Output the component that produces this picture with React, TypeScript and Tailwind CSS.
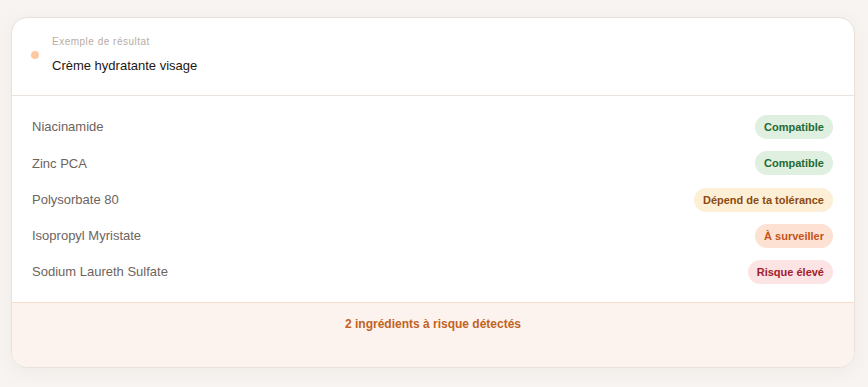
import React from 'react';

type Level = 'ok' | 'tolerance' | 'watch' | 'high';

const ingredients: { name: string; label: string; level: Level }[] = [
  { name: 'Niacinamide', label: 'Compatible', level: 'ok' },
  { name: 'Zinc PCA', label: 'Compatible', level: 'ok' },
  { name: 'Polysorbate 80', label: 'Dépend de ta tolérance', level: 'tolerance' },
  { name: 'Isopropyl Myristate', label: 'À surveiller', level: 'watch' },
  { name: 'Sodium Laureth Sulfate', label: 'Risque élevé', level: 'high' },
];

const badgeClass: Record<Level, string> = {
  ok: 'bg-[#dfefe0] text-[#1f6a35]',
  tolerance: 'bg-[#fdefd6] text-[#8a4a10]',
  watch: 'bg-[#fde2d3] text-[#c4521a]',
  high: 'bg-[#fce3e4] text-[#a31c2b]',
};

export default function App() {
  return (
    <div className="min-h-[387px] bg-[#f7f4f1] pl-[11px] pt-[17px] font-['Liberation_Sans',Arial,sans-serif]">
      <div className="w-[844px] overflow-hidden rounded-2xl border border-[#e8e0d9] bg-white shadow-[0_4px_18px_rgba(120,90,60,0.06)]">
        <div className="flex items-center gap-[13px] border-b border-[#ebe3dd] pl-[19px] pr-5 pt-[17px] pb-[20px]">
          <span className="h-2 w-2 rounded-full bg-[#fdc9a4]" />
          <div className="flex flex-col gap-2">
            <span className="text-[10px] leading-[14px] tracking-[0.5px] text-[#b8aca4]">Exemple de résultat</span>
            <span className="text-[13px] leading-[18px] text-[#1d1815]">Crème hydratante visage</span>
          </div>
        </div>

        <div className="pl-5 pr-[21px] pt-[13px] pb-[12px]">
          {ingredients.map((item) => (
            <div key={item.name} className="flex h-[36.25px] items-center justify-between">
              <span className="text-[13px] text-[#6d645e]">{item.name}</span>
              <span
                className={`rounded-full px-[9px] py-[5px] text-[11px] font-bold leading-[14px] ${badgeClass[item.level]}`}
              >
                {item.label}
              </span>
            </div>
          ))}
        </div>

        <div className="border-t border-[#f8dccb] bg-[#fdf3ee] pt-[13px] pb-[35px] text-center text-[12px] font-bold leading-[16px] text-[#c2621f]">
          2 ingrédients à risque détectés
        </div>
      </div>
    </div>
  );
}
